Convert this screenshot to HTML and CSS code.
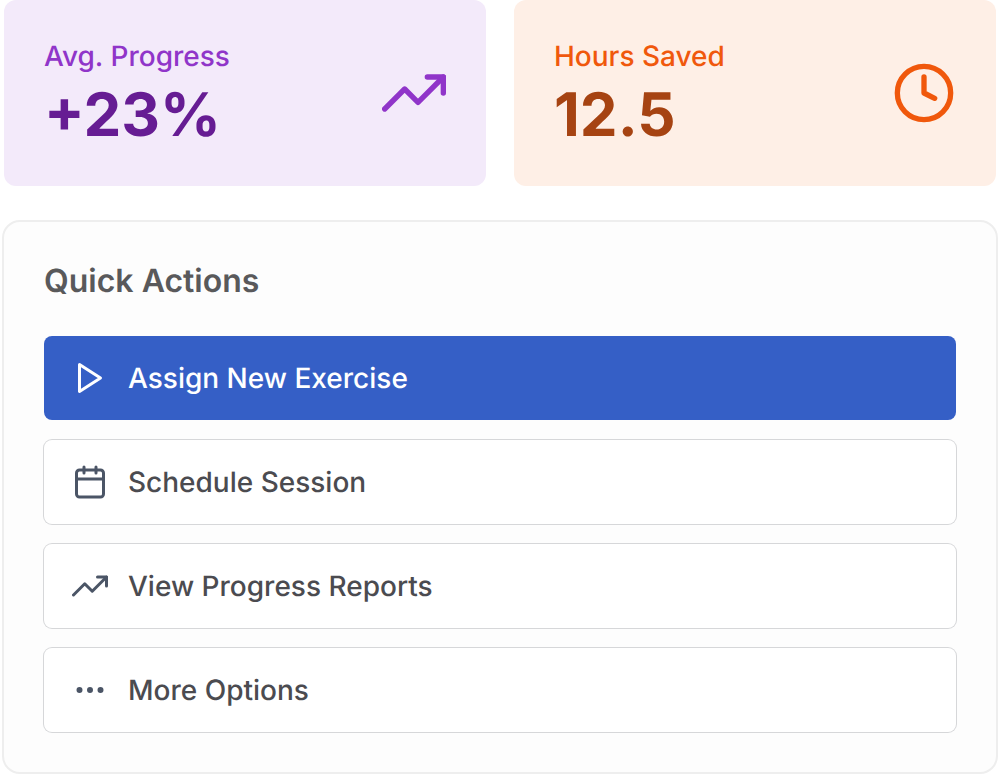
FILE: index.html
```html
<!DOCTYPE html>
<html lang="en">
<head>
  <meta charset="UTF-8" />
  <meta name="viewport" content="width=device-width, initial-scale=1.0" />
  <title>Dashboard</title>
  <link rel="stylesheet" href="styles.css">
</head>
<body>
  <div class="stats">
    <div class="stat stat-purple">
      <div>
        <p class="stat-label">Avg. Progress</p>
        <p class="stat-value">+23%</p>
      </div>
      <svg class="icon icon-lg" viewBox="0 0 24 24" aria-hidden="true">
        <polyline points="23 6 13.5 15.5 8.5 10.5 1 18"/>
        <polyline points="17 6 23 6 23 12"/>
      </svg>
    </div>
    <div class="stat stat-orange">
      <div>
        <p class="stat-label">Hours Saved</p>
        <p class="stat-value">12.5</p>
      </div>
      <svg class="icon icon-lg" viewBox="0 0 24 24" aria-hidden="true">
        <circle cx="12" cy="12" r="10"/>
        <polyline points="12 6 12 12 16 14"/>
      </svg>
    </div>
  </div>

  <section class="panel">
    <h2>Quick Actions</h2>
    <div class="actions">
      <button type="button" class="action primary">
        <svg class="icon" viewBox="0 0 24 24" aria-hidden="true">
          <polygon points="5 3 19 12 5 21 5 3"/>
        </svg>
        Assign New Exercise
      </button>
      <button type="button" class="action">
        <svg class="icon" viewBox="0 0 24 24" aria-hidden="true">
          <rect x="3" y="4" width="18" height="18" rx="2"/>
          <line x1="16" y1="2" x2="16" y2="6"/>
          <line x1="8" y1="2" x2="8" y2="6"/>
          <line x1="3" y1="10" x2="21" y2="10"/>
        </svg>
        Schedule Session
      </button>
      <button type="button" class="action">
        <svg class="icon" viewBox="0 0 24 24" aria-hidden="true">
          <polyline points="23 6 13.5 15.5 8.5 10.5 1 18"/>
          <polyline points="17 6 23 6 23 12"/>
        </svg>
        View Progress Reports
      </button>
      <button type="button" class="action">
        <svg class="icon" viewBox="0 0 24 24" aria-hidden="true">
          <circle cx="5" cy="12" r="1"/>
          <circle cx="12" cy="12" r="1"/>
          <circle cx="19" cy="12" r="1"/>
        </svg>
        More Options
      </button>
    </div>
  </section>
</body>
</html>
```
FILE: styles.css
```css
body {
  font-family: Inter, sans-serif;
  text-rendering: geometricPrecision;
  margin: 0;
  padding: 0 2px 2px;
  background: white;
}
.stats {
  display: grid;
  grid-template-columns: 1fr 1fr;
  gap: 28px;
  padding: 0 2px;
}
.stat {
  display: flex;
  align-items: center;
  justify-content: space-between;
  padding: 34px 40px;
  border-radius: 12px;
}
.stat p {
  margin: 0;
}
.stat-label {
  font-size: 28px;
  line-height: 44px;
  font-weight: 500;
}
.stat-value {
  font-size: 60px;
  line-height: 74px;
  font-weight: 700;
}
.stat-purple {
  background: #f3eafa;
  color: #9035c9;
}
.stat-purple .stat-value {
  color: #661c93;
}
.stat-orange {
  background: #feefe6;
  color: #f0580c;
}
.stat-orange .stat-value {
  color: #a64312;
}
.icon {
  width: 36px;
  height: 36px;
  flex-shrink: 0;
  fill: none;
  stroke: currentColor;
  stroke-width: 2;
  stroke-linecap: round;
  stroke-linejoin: round;
}
.icon-lg {
  width: 64px;
  height: 64px;
}
.panel {
  margin-top: 34px;
  padding: 40px;
  background: #fdfdfd;
  border: 2px solid #eeeeee;
  border-radius: 18px;
}
.panel h2 {
  margin: 0 0 36px;
  font-size: 32px;
  line-height: 38px;
  font-weight: 600;
  color: #59595b;
}
.actions {
  display: flex;
  flex-direction: column;
  gap: 20px;
}
.action {
  display: flex;
  align-items: center;
  gap: 20px;
  padding: 24px 28px;
  background: white;
  border: none;
  border-radius: 8px;
  box-shadow: 0 0 0 1px #d6d7d9;
  font-family: inherit;
  text-rendering: inherit;
  font-size: 28px;
  line-height: 36px;
  font-weight: 500;
  color: #4b4b50;
  text-align: left;
  cursor: pointer;
}
.action .icon {
  color: #4b5566;
}
.primary {
  background: #355fc6;
  box-shadow: none;
  color: white;
}
.primary .icon {
  color: white;
}
```
